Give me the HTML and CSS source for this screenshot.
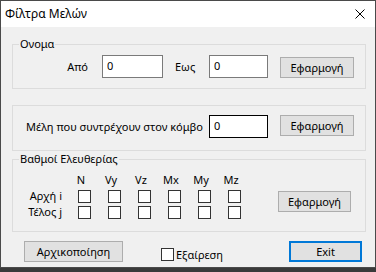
FILE: index.html
```html
<!DOCTYPE html>
<html lang="el">
<head>
<meta charset="utf-8">
<title>Φίλτρα Μελών</title>
<link rel="stylesheet" href="styles.css">
</head>
<body>
<div class="window">
  <div class="titlebar">
    <span class="title">Φίλτρα Μελών</span>
    <svg class="close" width="10" height="10" viewBox="0 0 10 10"><path d="M0.5 0.5L9.5 9.5M9.5 0.5L0.5 9.5" stroke="#000" stroke-width="1" fill="none"/></svg>
  </div>
  <div class="content">
    <div class="group g1">
      <span class="legend">Ονομα</span>
      <div class="row">
        <span class="lbl lbl-from">Από</span>
        <input class="txt w-from" type="text" value="0">
        <span class="lbl lbl-to">Εως</span>
        <input class="txt w-to" type="text" value="0">
        <button class="btn btn-g1">Εφαρμογή</button>
      </div>
    </div>
    <div class="group g2">
      <div class="row">
        <span class="lbl lbl-node">Μέλη που συντρέχουν στον κόμβο</span>
        <input class="txt w-to focus" type="text" value="0">
        <button class="btn btn-g2">Εφαρμογή</button>
      </div>
    </div>
    <div class="group g3">
      <span class="legend">Βαθμοί Ελευθερίας</span>
      <div class="row">
        <div class="dof">
          <span></span>
          <span class="hd">N</span><span class="hd">Vy</span><span class="hd">Vz</span><span class="hd">Mx</span><span class="hd">My</span><span class="hd">Mz</span>
          <span class="rl">Αρχή i</span>
          <span class="cc"><input class="cb" type="checkbox"></span><span class="cc"><input class="cb" type="checkbox"></span><span class="cc"><input class="cb" type="checkbox"></span><span class="cc"><input class="cb" type="checkbox"></span><span class="cc"><input class="cb" type="checkbox"></span><span class="cc"><input class="cb" type="checkbox"></span>
          <span class="rl">Τέλος j</span>
          <span class="cc"><input class="cb" type="checkbox"></span><span class="cc"><input class="cb" type="checkbox"></span><span class="cc"><input class="cb" type="checkbox"></span><span class="cc"><input class="cb" type="checkbox"></span><span class="cc"><input class="cb" type="checkbox"></span><span class="cc"><input class="cb" type="checkbox"></span>
        </div>
        <button class="btn btn-g3">Εφαρμογή</button>
      </div>
    </div>
    <div class="footer">
      <button class="btn btn-reset">Αρχικοποίηση</button>
      <label class="except"><input class="cb" type="checkbox"><span>Εξαίρεση</span></label>
      <button class="btn btn-exit">Exit</button>
    </div>
  </div>
</div>
</body>
</html>
```
FILE: styles.css
```css
* { box-sizing: border-box; }
html, body {
  margin: 0;
  padding: 0;
  width: 376px;
  height: 272px;
  overflow: hidden;
  background: #3a3a3a;
}
body {
  font-family: "Noto Sans", "DejaVu Sans", sans-serif;
  font-size: 11px;
  color: #000;
}
.window {
  width: 376px;
  height: 268px;
  border: 1px solid #4a4a4a;
  background: #f0f0f0;
  display: flex;
  flex-direction: column;
}
.titlebar {
  height: 26px;
  background: #fff;
  display: flex;
  align-items: center;
  justify-content: space-between;
  padding: 0 10px 0 4px;
}
.title { line-height: 26px; font-size: 12px; }
.close { display: block; }
.content {
  padding: 17px 9px 0 11px;
  display: flex;
  flex-direction: column;
}
.group {
  position: relative;
  width: 354px;
  border: 1px solid #dcdcdc;
}
.legend {
  position: absolute;
  top: -9px;
  left: 6px;
  padding: 0 1px;
  line-height: 16px;
  background: #f0f0f0;
}
.row {
  display: flex;
  align-items: flex-start;
}
.g1 { height: 45px; padding-top: 10px; }
.g2 { height: 46px; margin-top: 16px; padding-top: 9px; }
.g3 { height: 73px; margin-top: 8px; padding-top: 11px; }
.lbl { line-height: 23px; white-space: nowrap; }
.lbl-from { width: 89px; text-align: right; padding-right: 14px; }
.lbl-to { width: 46px; padding-left: 12px; }
.lbl-node { width: 196px; padding-left: 13px; }
.txt {
  height: 23px;
  margin: 0;
  border: 1px solid #7a7a7a;
  background: #fff;
  padding: 2px 4px 5px;
  font: inherit;
  color: #000;
  outline: none;
}
.txt.focus { border-color: #000; }
.w-from { width: 61px; }
.w-to { width: 59px; }
.btn {
  height: 21px;
  margin: 0;
  padding: 0;
  border: 1px solid #adadad;
  background: #e1e1e1;
  font: inherit;
  color: #000;
  line-height: 19px;
}
.btn-g1 { width: 74px; margin-left: 12px; margin-top: 2px; }
.btn-g2 { width: 74px; margin-left: 12px; }
.btn-g3 { width: 73px; margin-left: 28px; margin-top: 20px; }
.dof {
  display: grid;
  grid-template-columns: 57px repeat(6, 30px);
  grid-template-rows: 17px 16px 16px;
}
.hd {
  text-align: center;
  padding-right: 8px;
  line-height: 17px;
}
.rl {
  text-align: right;
  padding-right: 8px;
  line-height: 16px;
  white-space: nowrap;
}
.cc {
  display: flex;
  align-items: center;
  padding-left: 8px;
}
.cb {
  -webkit-appearance: none;
  appearance: none;
  width: 13px;
  height: 13px;
  margin: 0;
  border: 1px solid #333;
  background: #fff;
  border-radius: 0;
}
.footer {
  margin-top: 9px;
  display: flex;
  align-items: flex-start;
  padding-left: 12px;
}
.btn-reset { width: 99px; }
.except {
  display: flex;
  align-items: center;
  margin-left: 38px;
  margin-top: 7px;
  height: 13px;
}
.except span { margin-left: 2px; line-height: 13px; }
.btn-exit {
  width: 73px;
  margin-left: auto;
  margin-right: 4px;
  border: 2px solid #0078d7;
  line-height: 17px;
}
```
